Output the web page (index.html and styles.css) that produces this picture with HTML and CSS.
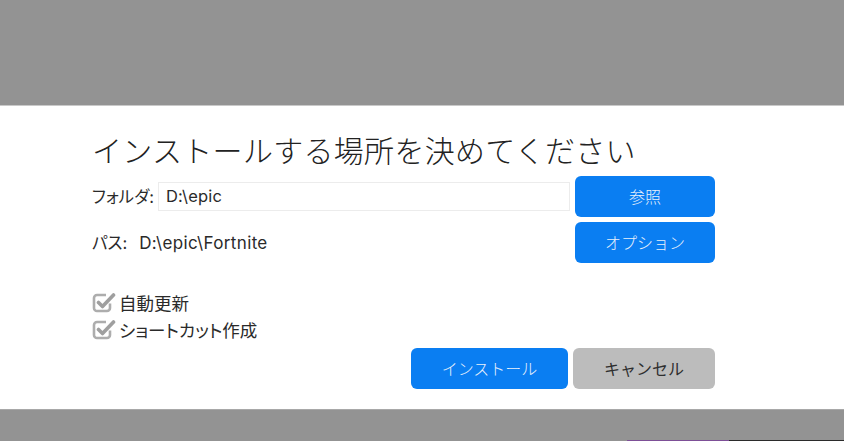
FILE: index.html
```html
<!DOCTYPE html>
<html lang="ja">
<head>
<meta charset="utf-8">
<title>インストール</title>
<link rel="stylesheet" href="styles.css">
</head>
<body>
<div class="screen">
  <div class="shade-top"></div>
  <div class="panel">
    <h1 class="title">インストールする場所を決めてください</h1>
    <div class="row row-first">
      <span class="label label-folder">フォルダ:</span>
      <div class="field">D:\epic</div>
      <button class="btn btn-blue btn-side">参照</button>
    </div>
    <div class="row">
      <span class="label"><span class="path-key">パス:</span><span class="path-val">D:\epic\Fortnite</span></span>
      <button class="btn btn-blue btn-side">オプション</button>
    </div>
    <div class="checks">
      <label class="check">
        <svg class="check-icon" viewBox="0 0 24 23" width="24" height="23">
          <path d="M18 12.5v4.5a3 3 0 0 1-3 3H5a3 3 0 0 1-3-3V7a3 3 0 0 1 3-3h9" fill="none" stroke="#adadad" stroke-width="2.6"/>
          <path d="M6.5 11.5l4 4L21.5 4" fill="none" stroke="#9f9f9f" stroke-width="3.6" stroke-linecap="round" stroke-linejoin="round"/>
        </svg>
        <span>自動更新</span>
      </label>
      <label class="check">
        <svg class="check-icon" viewBox="0 0 24 23" width="24" height="23">
          <path d="M18 12.5v4.5a3 3 0 0 1-3 3H5a3 3 0 0 1-3-3V7a3 3 0 0 1 3-3h9" fill="none" stroke="#adadad" stroke-width="2.6"/>
          <path d="M6.5 11.5l4 4L21.5 4" fill="none" stroke="#9f9f9f" stroke-width="3.6" stroke-linecap="round" stroke-linejoin="round"/>
        </svg>
        <span>ショートカット作成</span>
      </label>
    </div>
    <div class="actions">
      <button class="btn btn-blue btn-install">インストール</button>
      <button class="btn btn-gray btn-cancel">キャンセル</button>
    </div>
  </div>
  <div class="shade-bottom"></div>
  <div class="taskbar-edge">
    <div class="edge-gap"></div>
    <div class="edge-purple"></div>
    <div class="edge-dark"></div>
  </div>
</div>
</body>
</html>
```
FILE: styles.css
```css
html, body {
  margin: 0;
  padding: 0;
  background: #939393;
}

.screen {
  width: 844px;
  height: 441px;
  display: flex;
  flex-direction: column;
  overflow: hidden;
  font-family: "Noto Sans CJK JP", "Noto Sans", sans-serif;
  color: #2a2a2a;
}

.shade-top {
  height: 105px;
  background: #939393;
  border-bottom: 1px solid #c9c9c9;
}

.panel {
  height: 304px;
  box-sizing: border-box;
  background: #fff;
  padding: 23px 129px 0 92px;
  display: flex;
  flex-direction: column;
}

.title {
  margin: 0;
  font-size: 30px;
  font-weight: 300;
  line-height: 40px;
  color: #222;
  letter-spacing: 0.3px;
}

.row {
  display: flex;
  align-items: center;
  height: 41px;
  margin-top: 5px;
}

.row-first {
  margin-top: 7px;
}

/* Latin in a UI sans, kana packed proportionally */
.label,
.field,
.check {
  font-family: "Inter", "Noto Sans CJK JP", sans-serif;
  font-feature-settings: "palt";
  font-weight: 400;
}

.label {
  font-size: 16.5px;
  flex: 1;
  white-space: nowrap;
}

.label-folder {
  flex: 0 0 66px;
}

.path-val {
  margin-left: 12px;
  font-size: 17px;
  letter-spacing: 0.35px;
}

.field {
  flex: 1;
  height: 29px;
  box-sizing: border-box;
  border: 1px solid #ececec;
  padding: 0 7px;
  font-size: 16.5px;
  line-height: 27px;
  letter-spacing: 0.2px;
  color: #2a2a2a;
}

.btn {
  border: none;
  border-radius: 6px;
  font-family: inherit;
  font-size: 16px;
  font-weight: 300;
  height: 41px;
  padding: 0;
  cursor: pointer;
}

.btn-blue {
  background: #0a7ef2;
  color: #e8f0fb;
}

.btn-gray {
  background: #bcbcbc;
  color: #2e2e2e;
  font-weight: 400;
}

.btn-side {
  width: 140px;
  margin-left: 5px;
}

.checks {
  margin-top: 28px;
  display: flex;
  flex-direction: column;
  gap: 4px;
}

.check {
  display: flex;
  align-items: center;
  height: 23px;
  font-size: 17.5px;
}

.check-icon {
  display: block;
  margin-right: 3px;
}

.actions {
  margin-top: 7px;
  display: flex;
  justify-content: flex-end;
  gap: 5px;
}

.btn-install {
  width: 157px;
}

.btn-cancel {
  width: 142px;
}

.shade-bottom {
  height: 30px;
  background: #939393;
  border-top: 1px solid #a8a8a8;
}

.taskbar-edge {
  height: 1px;
  display: flex;
}

.edge-gap {
  width: 627px;
  background: #939393;
}

.edge-purple {
  width: 102px;
  background: #7d4f97;
}

.edge-dark {
  flex: 1;
  background: #2b2b2b;
}
```
